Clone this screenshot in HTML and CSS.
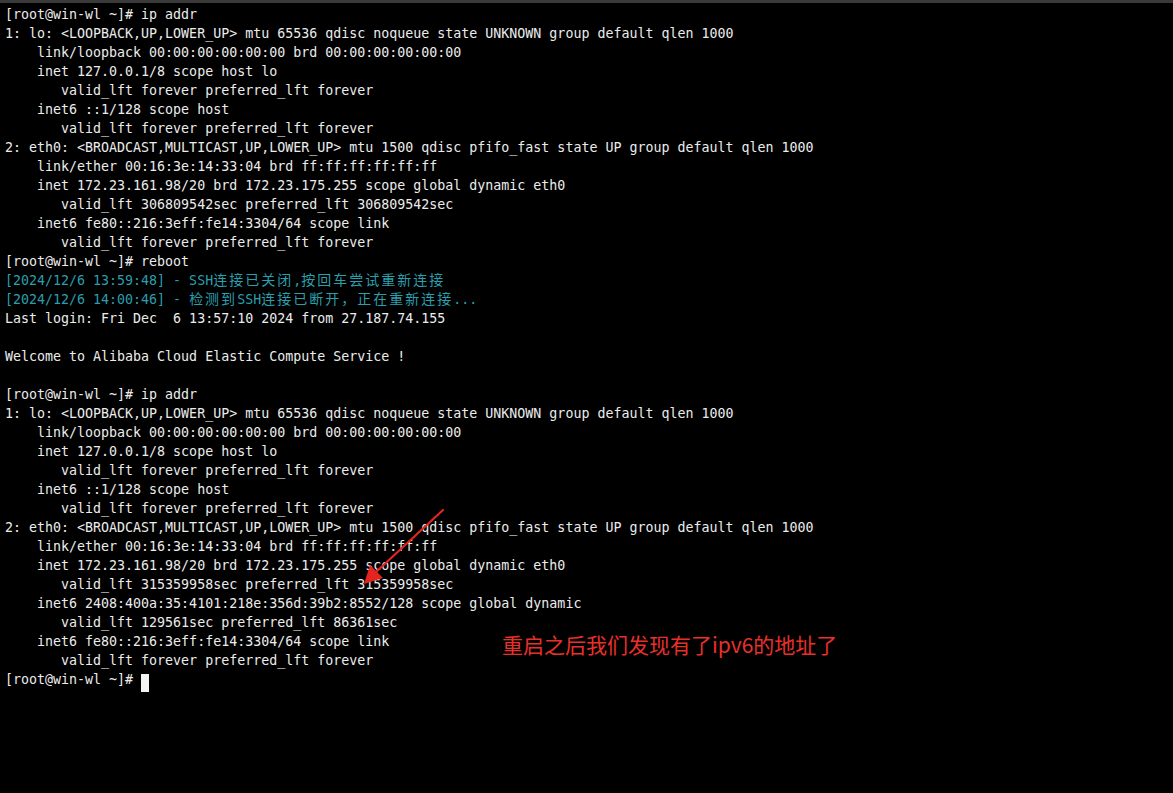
FILE: index.html
```html
<!DOCTYPE html>
<html>
  <head>
    <title>ip addr</title>
    <link rel="stylesheet" href="styles.css">
  </head>
  <body>
    <div class="topbar"></div>
    <pre class="term">[root@win-wl ~]# ip addr
1: lo: &lt;LOOPBACK,UP,LOWER_UP&gt; mtu 65536 qdisc noqueue state UNKNOWN group default qlen 1000
    link/loopback 00:00:00:00:00:00 brd 00:00:00:00:00:00
    inet 127.0.0.1/8 scope host lo
       valid_lft forever preferred_lft forever
    inet6 ::1/128 scope host
       valid_lft forever preferred_lft forever
2: eth0: &lt;BROADCAST,MULTICAST,UP,LOWER_UP&gt; mtu 1500 qdisc pfifo_fast state UP group default qlen 1000
    link/ether 00:16:3e:14:33:04 brd ff:ff:ff:ff:ff:ff
    inet 172.23.161.98/20 brd 172.23.175.255 scope global dynamic eth0
       valid_lft 306809542sec preferred_lft 306809542sec
    inet6 fe80::216:3eff:fe14:3304/64 scope link
       valid_lft forever preferred_lft forever
[root@win-wl ~]# reboot
<span class="info">[2024/12/6 13:59:48] - SSH<span class="wide">连接已关闭</span>,<span class="wide">按回车尝试重新连接</span></span>
<span class="info">[2024/12/6 14:00:46] - <span class="wide">检测到</span>SSH<span class="wide">连接已断开，正在重新连接</span>...</span>
Last login: Fri Dec  6 13:57:10 2024 from 27.187.74.155

Welcome to Alibaba Cloud Elastic Compute Service !

[root@win-wl ~]# ip addr
1: lo: &lt;LOOPBACK,UP,LOWER_UP&gt; mtu 65536 qdisc noqueue state UNKNOWN group default qlen 1000
    link/loopback 00:00:00:00:00:00 brd 00:00:00:00:00:00
    inet 127.0.0.1/8 scope host lo
       valid_lft forever preferred_lft forever
    inet6 ::1/128 scope host
       valid_lft forever preferred_lft forever
2: eth0: &lt;BROADCAST,MULTICAST,UP,LOWER_UP&gt; mtu 1500 qdisc pfifo_fast state UP group default qlen 1000
    link/ether 00:16:3e:14:33:04 brd ff:ff:ff:ff:ff:ff
    inet 172.23.161.98/20 brd 172.23.175.255 scope global dynamic eth0
       valid_lft 315359958sec preferred_lft 315359958sec
    inet6 2408:400a:35:4101:218e:356d:39b2:8552/128 scope global dynamic
       valid_lft 129561sec preferred_lft 86361sec
    inet6 fe80::216:3eff:fe14:3304/64 scope link
       valid_lft forever preferred_lft forever
[root@win-wl ~]# <span class="cursor"> </span></pre>

    <div class="note">重启之后我们发现有了ipv6的地址了</div>
    <svg class="arrow" width="1173" height="793" viewBox="0 0 1173 793">
      <line x1="443" y1="510" x2="376" y2="572" stroke="#e3251f" stroke-width="2.2" stroke-linecap="round" />
      <polygon points="364,584 370,565 383,578" fill="#e3251f" />
    </svg>
  </body>
</html>
```

FILE: styles.css
```css
body {
  margin: 0;
  background-color: #000;
  height: 793px;
  overflow: hidden;
  position: relative;
}
.topbar {
  height: 3px;
  background-color: #3a3a3a;
}
.term {
  margin: 0;
  padding: 2px 0 0 5px;
  font-family: "DejaVu Sans Mono", "Noto Sans CJK SC", monospace;
  font-size: 13.3px;
  line-height: 19px;
  color: #ececec;
}
.info {
  color: #2a9fad;
}
.wide {
  font-family: "Noto Sans CJK SC", sans-serif;
  font-size: 14px;
  line-height: 1;
  letter-spacing: 2px;
}
.cursor {
  display: inline-block;
  width: 8px;
  height: 18px;
  vertical-align: -4px;
  background-color: #f4f4f4;
}
.note {
  position: absolute;
  left: 502px;
  top: 630px;
  font-family: "Noto Sans CJK SC", "Noto Sans", sans-serif;
  font-size: 21px;
  line-height: 28px;
  color: #e8302a;
}
.arrow {
  position: absolute;
  left: 0;
  top: 0;
}
```
